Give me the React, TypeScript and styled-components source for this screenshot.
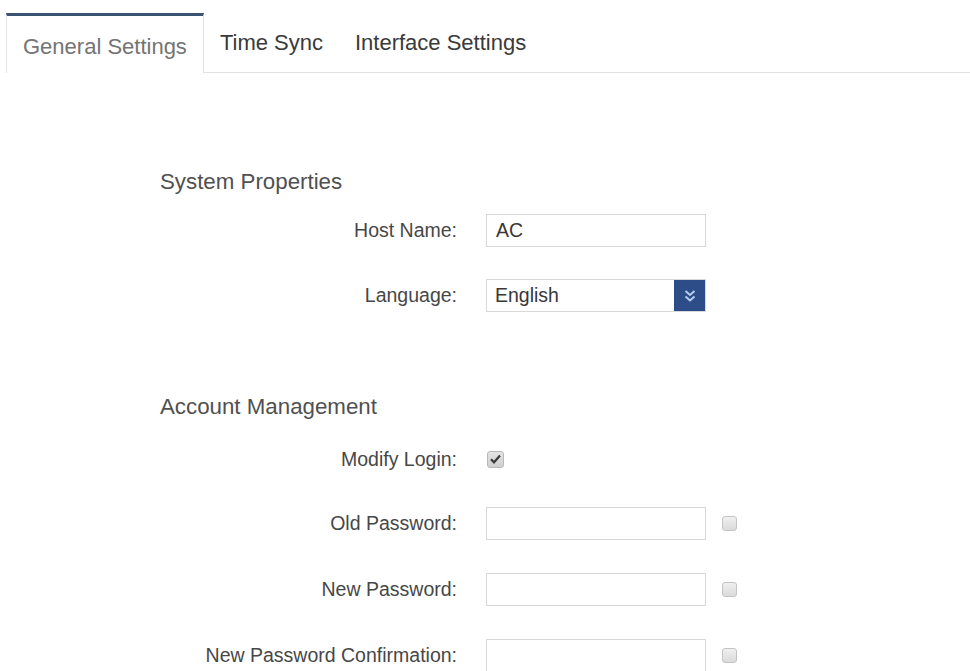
import React, { useState } from "react";
import styled, { createGlobalStyle } from "styled-components";

const GlobalStyle = createGlobalStyle`
  html, body {
    margin: 0;
    padding: 0;
    background: #ffffff;
    font-family: "Liberation Sans", Arial, sans-serif;
    overflow: hidden;
  }
`;

const tabs = ["General Settings", "Time Sync", "Interface Settings"];

const App = () => {
  const [activeTab, setActiveTab] = useState(0);
  const [modifyLogin, setModifyLogin] = useState(true);

  return (
    <Page>
      <GlobalStyle />
      <TabBar>
        {tabs.map((name, i) => (
          <Tab key={name} active={i === activeTab} onClick={() => setActiveTab(i)}>
            {name}
          </Tab>
        ))}
        <TabFiller />
      </TabBar>

      <Content>
        <Section>
          <SectionTitle>System Properties</SectionTitle>
          <Row>
            <Label>Host Name:</Label>
            <TextInput defaultValue="AC" />
          </Row>
          <Row>
            <Label>Language:</Label>
            <Select>
              <SelectValue>English</SelectValue>
              <SelectButton>
                <svg width="16" height="16" viewBox="0 0 16 16" fill="none">
                  <path d="M3.5 3 L8 7 L12.5 3" stroke="#b3cdee" strokeWidth="2" />
                  <path d="M3.5 8.5 L8 12.5 L12.5 8.5" stroke="#b3cdee" strokeWidth="2" />
                </svg>
              </SelectButton>
            </Select>
          </Row>
        </Section>

        <Section second>
          <SectionTitle>Account Management</SectionTitle>
          <Row compact>
            <Label>Modify Login:</Label>
            <CheckBox checked={modifyLogin} onClick={() => setModifyLogin(!modifyLogin)}>
              {modifyLogin && (
                <svg width="11" height="10" viewBox="0 0 11 10">
                  <path d="M1 5.3 L4 8.3 L10 1.5" stroke="#3a3a3a" strokeWidth="2.2" fill="none" />
                </svg>
              )}
            </CheckBox>
          </Row>
          <Row tall>
            <Label>Old Password:</Label>
            <TextInput type="password" />
            <SmallBox />
          </Row>
          <Row tall>
            <Label>New Password:</Label>
            <TextInput type="password" />
            <SmallBox />
          </Row>
          <Row tall>
            <Label>New Password Confirmation:</Label>
            <TextInput type="password" />
            <SmallBox />
          </Row>
        </Section>
      </Content>
    </Page>
  );
};

const Page = styled.div`
  width: 970px;
  height: 671px;
  padding-top: 13px;
  box-sizing: border-box;
`;

const TabBar = styled.div`
  display: flex;
  align-items: stretch;
  height: 60px;
  padding-left: 6px;
`;

const Tab = styled.div<{ active: boolean }>`
  display: flex;
  align-items: center;
  padding: 0 16px;
  font-size: 22px;
  cursor: pointer;
  white-space: nowrap;
  box-sizing: border-box;
  color: ${({ active }) => (active ? "#747474" : "#3a3a3a")};
  ${({ active }) =>
    active
      ? `
      border-top: 3px solid #3a5472;
      border-left: 1px solid #e6e6e6;
      border-right: 1px solid #dedede;
      padding-top: 4px;
      background: #fff;
    `
      : `
      border-bottom: 1px solid #e2e2e2;
    `}
`;

const TabFiller = styled.div`
  flex: 1;
  border-bottom: 1px solid #e2e2e2;
`;

const Content = styled.div`
  padding-left: 160px;
  padding-top: 92px;
`;

const Section = styled.div<{ second?: boolean }>`
  display: flex;
  flex-direction: column;
  margin-top: ${({ second }) => (second ? "62px" : "0")};
`;

const SectionTitle = styled.div`
  height: 33px;
  line-height: 33px;
  font-size: 22.3px;
  color: #505050;
`;

const Row = styled.div<{ compact?: boolean; tall?: boolean }>`
  display: grid;
  grid-template-columns: 297px 220px auto;
  column-gap: 29px;
  align-items: center;
  height: ${({ compact, tall }) => (compact ? "62px" : tall ? "66px" : "65px")};
  margin-top: ${({ compact }) => (compact ? "5px" : "0")};
`;

const Label = styled.div`
  text-align: right;
  font-size: 19.5px;
  color: #474747;
  white-space: nowrap;
`;

const TextInput = styled.input`
  width: 220px;
  height: 33px;
  box-sizing: border-box;
  border: 1px solid #d8d8d8;
  padding: 0 9px;
  font-family: "Liberation Sans", Arial, sans-serif;
  font-size: 19.5px;
  color: #383838;
  outline: none;
`;

const Select = styled.div`
  width: 220px;
  height: 33px;
  box-sizing: border-box;
  border: 1px solid #d8d8d8;
  display: flex;
  align-items: center;
  justify-content: space-between;
`;

const SelectValue = styled.span`
  padding-left: 8px;
  font-size: 19.5px;
  color: #383838;
`;

const SelectButton = styled.div`
  width: 31px;
  height: 31px;
  background: #2c4d88;
  display: flex;
  align-items: center;
  justify-content: center;
`;

const CheckBox = styled.div<{ checked: boolean }>`
  width: 15px;
  height: 15px;
  margin-left: 1px;
  border: 1px solid #b8b8b8;
  border-radius: 3px;
  background: linear-gradient(#e4e4e4, #cfcfcf);
  display: flex;
  align-items: center;
  justify-content: center;
  cursor: pointer;
`;

const SmallBox = styled.div`
  width: 13px;
  height: 13px;
  margin-left: -13px;
  border: 1px solid #c4c4c4;
  border-radius: 3px;
  background: linear-gradient(#f0f0f0, #dadada);
`;

export default App;
